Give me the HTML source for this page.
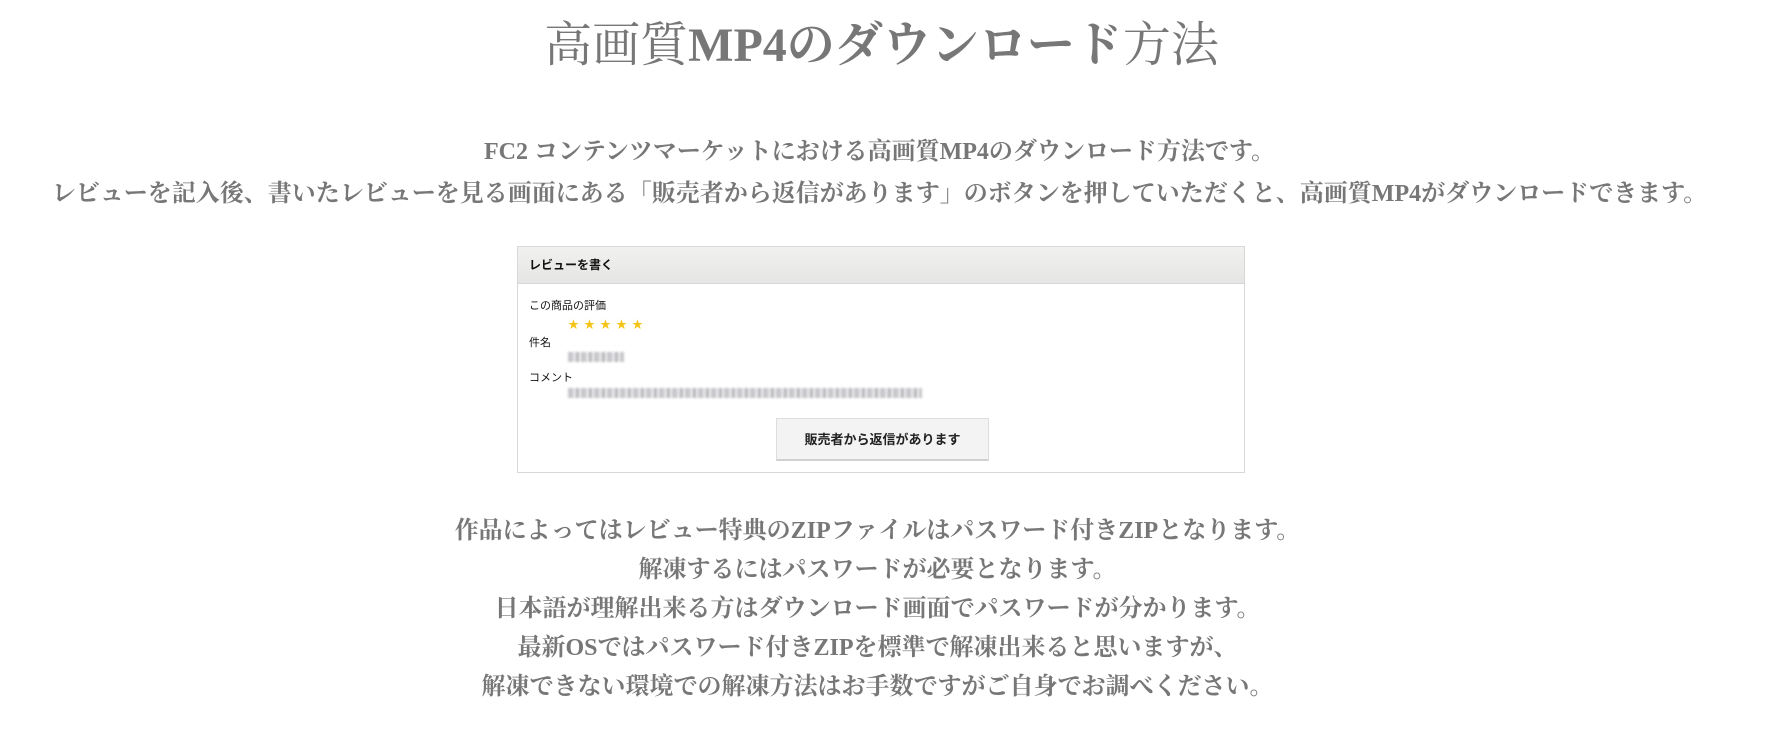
<!DOCTYPE html>
<html><head><meta charset="utf-8"><style>
body{margin:0;background:#fff;width:1781px;height:750px;overflow:hidden;font-family:"Liberation Serif","Noto Serif CJK SC",serif;color:#777;}
.t{position:absolute;left:-11px;width:1781px;text-align:center;white-space:nowrap;}
h1{position:absolute;left:-9px;width:1781px;top:16px;margin:0;text-align:center;font-size:48px;font-weight:normal;color:#777;line-height:60px;}
h1 b{font-weight:bold}
.p1{font-size:24px;font-weight:bold;line-height:42px;top:131px;}
.p2{font-size:24px;font-weight:bold;line-height:39px;top:512px;left:-13px;}
.box{position:absolute;left:517px;top:246px;width:726px;height:225px;border:1px solid #d8d8d8;font-family:"Liberation Sans","Noto Sans CJK JP",sans-serif;color:#111;}
.hd{height:36px;background:linear-gradient(#f1f1ef,#e5e6e3);border-bottom:1px solid #d8d8d8;font-size:12px;font-weight:bold;line-height:36px;padding-left:11px;}
.l{position:absolute;left:11px;font-size:11px;}
.st{position:absolute;left:50px;top:69px;color:#f5c518;font-size:11px;letter-spacing:5px;}
.bl{position:absolute;left:50px;height:10px;background:repeating-linear-gradient(90deg,#c8c8cc 0 5px,#e6e6e8 5px 8px,#b8b8bc 8px 11px,#f0f0f0 11px 13px);filter:blur(1px);}
.btn{position:absolute;left:258px;top:171px;width:213px;height:43px;background:#f3f3f3;border:1px solid #ddd;border-bottom:2px solid #d0d0d0;box-sizing:border-box;text-align:center;line-height:41px;font-size:13px;font-weight:bold;color:#222;}
</style></head><body>
<h1>高画質<b>MP4のダウンロード</b>方法</h1>
<div class="t p1">FC2 コンテンツマーケットにおける高画質MP4のダウンロード方法です。<br>レビューを記入後、書いたレビューを見る画面にある「販売者から返信があります」のボタンを押していただくと、高画質MP4がダウンロードできます。</div>
<div class="box">
<div class="hd">レビューを書く</div>
<div class="l" style="top:50px">この商品の評価</div>
<div class="st">★★★★★</div>
<div class="l" style="top:87px">件名</div>
<div class="bl" style="top:105px;width:56px"></div>
<div class="l" style="top:122px">コメント</div>
<div class="bl" style="top:141px;width:354px"></div>
<div class="btn">販売者から返信があります</div>
</div>
<div class="t p2">作品によってはレビュー特典のZIPファイルはパスワード付きZIPとなります。<br>解凍するにはパスワードが必要となります。<br>日本語が理解出来る方はダウンロード画面でパスワードが分かります。<br>最新OSではパスワード付きZIPを標準で解凍出来ると思いますが、<br>解凍できない環境での解凍方法はお手数ですがご自身でお調べください。</div>
</body></html>
